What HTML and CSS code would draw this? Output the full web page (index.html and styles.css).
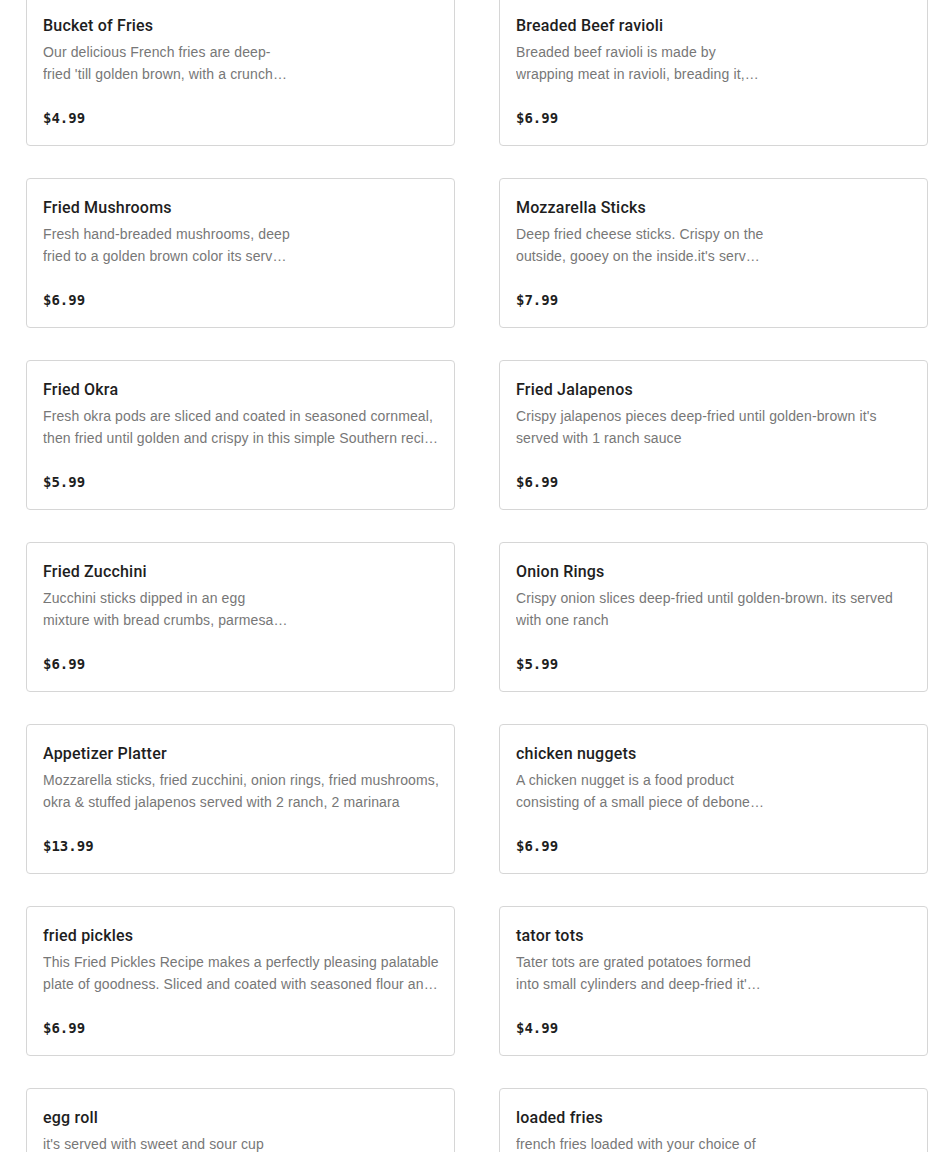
FILE: index.html
```html
<!DOCTYPE html>
<html>
<head>
<meta charset="utf-8">
<link rel="stylesheet" href="styles.css">
</head>
<body>
<div class="grid">
  <div class="card"><div class="title">Bucket of Fries</div><div class="desc narrow">Our delicious French fries are deep-fried 'till golden brown, with a crunchy exterior and a soft fluffy inside, served with ketchup</div><div class="price">$4.99</div></div>
  <div class="card"><div class="title">Breaded Beef ravioli</div><div class="desc narrow">Breaded beef ravioli is made by wrapping meat in ravioli, breading it, and frying until golden and crispy</div><div class="price">$6.99</div></div>

  <div class="card"><div class="title">Fried Mushrooms</div><div class="desc narrow">Fresh hand-breaded mushrooms, deep fried to a golden brown color its served with ranch sauce</div><div class="price">$6.99</div></div>
  <div class="card"><div class="title">Mozzarella Sticks</div><div class="desc narrow">Deep fried cheese sticks. Crispy on the outside, gooey on the inside.it's served with marinara sauce</div><div class="price">$7.99</div></div>

  <div class="card"><div class="title">Fried Okra</div><div class="desc">Fresh okra pods are sliced and coated in seasoned cornmeal, then fried until golden and crispy in this simple Southern recipe served with ranch</div><div class="price">$5.99</div></div>
  <div class="card"><div class="title">Fried Jalapenos</div><div class="desc">Crispy jalapenos pieces deep-fried until golden-brown it's served with 1 ranch sauce</div><div class="price">$6.99</div></div>

  <div class="card"><div class="title">Fried Zucchini</div><div class="desc narrow">Zucchini sticks dipped in an egg mixture with bread crumbs, parmesan cheese and fried until crispy</div><div class="price">$6.99</div></div>
  <div class="card"><div class="title">Onion Rings</div><div class="desc">Crispy onion slices deep-fried until golden-brown. its served with one ranch</div><div class="price">$5.99</div></div>

  <div class="card"><div class="title">Appetizer Platter</div><div class="desc">Mozzarella sticks, fried zucchini, onion rings, fried mushrooms, okra &amp; stuffed jalapenos served with 2 ranch, 2 marinara</div><div class="price">$13.99</div></div>
  <div class="card"><div class="title">chicken nuggets</div><div class="desc narrow">A chicken nugget is a food product consisting of a small piece of deboned chicken meat that is breaded or battered</div><div class="price">$6.99</div></div>

  <div class="card"><div class="title">fried pickles</div><div class="desc">This Fried Pickles Recipe makes a perfectly pleasing palatable plate of goodness. Sliced and coated with seasoned flour and fried until crispy</div><div class="price">$6.99</div></div>
  <div class="card"><div class="title">tator tots</div><div class="desc narrow">Tater tots are grated potatoes formed into small cylinders and deep-fried it's served with ketchup</div><div class="price">$4.99</div></div>

  <div class="card"><div class="title">egg roll</div><div class="desc narrow">it's served with sweet and sour cup</div><div class="price">$1.99</div></div>
  <div class="card"><div class="title">loaded fries</div><div class="desc narrow">french fries loaded with your choice of meat, cheese and sauce</div><div class="price">$8.99</div></div>
</div>
</body>
</html>
```
FILE: styles.css
```css
html, body {
  margin: 0;
  padding: 0;
  background: #ffffff;
}
body {
  font-family: "Liberation Sans", Arial, sans-serif;
  color: #1f1f1f;
}
.grid {
  display: grid;
  grid-template-columns: 429px 429px;
  column-gap: 44px;
  row-gap: 32px;
  margin: -4px 0 0 26px;
}
.card {
  border: 1px solid #d6d6d6;
  border-radius: 4px;
  padding: 17px 14px 15px 16px;
  box-sizing: border-box;
  height: 150px;
  background: #fff;
}
.title {
  font-family: Roboto, "Liberation Sans", sans-serif;
  font-size: 16px;
  line-height: 24px;
  font-weight: 500;
  letter-spacing: 0.2px;
  color: #1e1e1e;
}
.desc {
  margin-top: 3px;
  font-size: 14px;
  line-height: 22px;
  letter-spacing: 0.12px;
  color: #777777;
  height: 44px;
  display: -webkit-box;
  -webkit-line-clamp: 2;
  -webkit-box-orient: vertical;
  overflow: hidden;
}
.desc.narrow {
  max-width: 250px;
}
.price {
  margin-top: 22px;
  font-family: "DejaVu Sans Mono", "Liberation Mono", monospace;
  font-size: 14px;
  line-height: 22px;
  font-weight: 700;
  color: #1e1e1e;
}
```
